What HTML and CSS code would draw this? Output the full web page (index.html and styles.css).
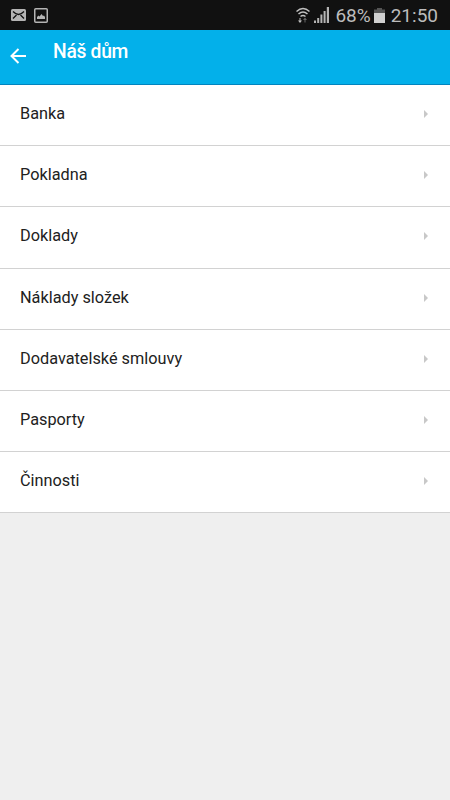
FILE: index.html
```html
<!DOCTYPE html>
<html lang="cs">
<head>
    <meta charset="UTF-8">
    <title>Náš dům</title>
    <link rel="stylesheet" href="styles.css">
</head>
<body>
    <div class="status-bar">
        <div class="notifications">
            <svg class="icon-mail" width="15" height="12" viewBox="0 0 15 12">
                <rect width="15" height="12" rx="1.5" fill="#b4b4b4"/>
                <path d="M2 2.500Q5 5.500 7.500 5.500T13 2.500M2 9.500l3.500-3.500M13 9.500L9.500 6" fill="none" stroke="#111" stroke-width="1.3"/>
            </svg>
            <svg class="icon-image" width="14" height="15" viewBox="0 0 14 15">
                <rect x=".75" y=".75" width="12.5" height="13.500" rx="1" fill="none" stroke="#b4b4b4" stroke-width="1.5"/>
                <path d="M3 11V9l1.500-1.500L5.500 8.500 7.500 6l1.500 2 1-.5 1 1.500v2z" fill="#b4b4b4"/>
            </svg>
        </div>
        <div class="system">
            <svg class="icon-wifi" width="14" height="17" viewBox="0 0 14 17">
                <path d="M.5 4.500q6.500-6 13 0M2.500 7q4.500-4 9 0M4.500 9.500q2.500-2 5 0" fill="none" stroke="#c0c0c0" stroke-width="1.500"/>
                <path d="M4.500 11v2.500H6L4 16l-2-2.500h1.500V11z" fill="#c0c0c0"/>
                <path d="M8.500 15.500V13H7l2-2.500 2 2.500H9.500v2.500z" fill="#666"/>
            </svg>
            <svg class="icon-signal" width="15" height="16" viewBox="0 0 15 16">
                <path d="M0 13.500h2V16H0zM3.200 11h2v5h-2zM6.400 7.500h2V16h-2zM9.600 4h2v12h-2zM12.800 0H15v16h-2.200z" fill="#b4b4b4"/>
            </svg>
            <span class="percent">68%</span>
            <svg class="icon-battery" width="11" height="15" viewBox="0 0 11 15">
                <path d="M3 0h5v1.500h3V5H0V1.500h3z" fill="#555"/>
                <path d="M0 5h11v10H0z" fill="#d0d0d0"/>
            </svg>
            <span class="clock">21:50</span>
        </div>
    </div>

    <div class="header">
        <svg class="back" width="18" height="18" viewBox="0 0 18 18">
            <path d="M16 9H2M8.500 2L1.500 9l7 7" fill="none" stroke="#fff" stroke-width="2"/>
        </svg>
        <h1>Náš dům</h1>
    </div>

    <ul class="menu">
        <li>Banka</li>
        <li>Pokladna</li>
        <li>Doklady</li>
        <li>Náklady složek</li>
        <li>Dodavatelské smlouvy</li>
        <li>Pasporty</li>
        <li>Činnosti</li>
    </ul>
</body>
</html>
```
FILE: styles.css
```css
body {
    margin: 0;
    font-family: Roboto, sans-serif;
    background-color: #efefef;
    color: #212121;
}
.status-bar {
    display: flex;
    justify-content: space-between;
    height: 30px;
    padding: 0 12px 0 11px;
    background-color: #111;
    color: #bcbcbc;
    font-size: 19px;
}
.notifications, .system {
    display: flex;
    align-items: center;
}
.icon-image {
    margin-left: 8px;
}
.icon-signal {
    margin: 0 6px 0 4px;
}
.icon-battery {
    margin: 0 6px 0 3px;
}
.header {
    display: flex;
    box-sizing: border-box;
    height: 55px;
    background-color: #03b0ea;
    border-bottom: 1px solid #0284be;
}
.back {
    margin: 17px 25px 0 10px;
}
h1 {
    margin: 11px 0 0;
    color: #fff;
    font-size: 19.3px;
    line-height: 22px;
    font-weight: 500;
    letter-spacing: -.3px;
}
.menu {
    margin: 0;
    padding: 0;
    list-style: none;
}
.menu li {
    display: flex;
    justify-content: space-between;
    box-sizing: border-box;
    height: 61.2px;
    padding: 19px 22px 0 20px;
    background-color: #fff;
    border-bottom: 1px solid #d2d2d2;
    font-size: 16.3px;
    line-height: 20px;
}
.menu li::after {
    content: "";
    margin-top: 6px;
    height: 0;
    border: 4px solid transparent;
    border-left: 4px solid #c8c8c8;
    border-right: 0;
}
```
